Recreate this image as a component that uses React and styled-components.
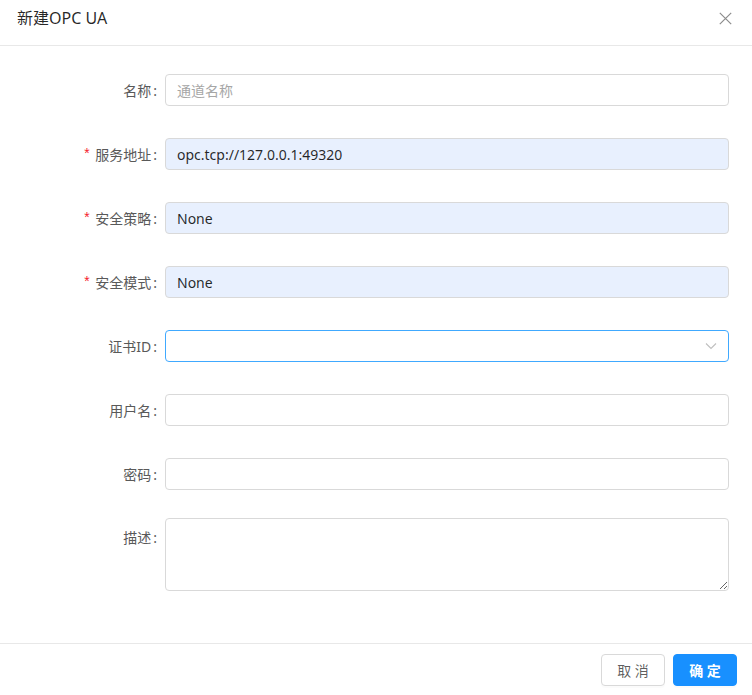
import React from "react";
import styled, { createGlobalStyle } from "styled-components";

const Global = createGlobalStyle`
  html, body { margin: 0; padding: 0; background: #fff; }
  body {
    font-family: "Noto Sans", "Noto Sans CJK SC", sans-serif;
    font-size: 14px;
    color: rgba(0,0,0,0.65);
  }
  * { box-sizing: border-box; }
`;

const Modal = styled.div`
  width: 752px;
  height: 695px;
  display: flex;
  flex-direction: column;
  background: #fff;
`;

const Header = styled.div`
  height: 46px;
  padding: 0 16px 9px 17px;
  display: flex;
  align-items: center;
  justify-content: space-between;
  border-bottom: 1px solid #e8e8e8;
`;

const Title = styled.div`
  font-size: 16px;
  line-height: 22px;
  color: rgba(0,0,0,0.85);
`;

const Close = styled.button`
  border: none;
  background: none;
  padding: 0;
  margin-right: 4px;
  width: 14px;
  height: 14px;
  display: flex;
  align-items: center;
  justify-content: center;
  cursor: pointer;
`;

const Body = styled.div`
  flex: 1;
  padding: 24px 23px 24px 24px;
  display: flex;
  flex-direction: column;
`;

const Item = styled.div`
  display: grid;
  grid-template-columns: 141px 1fr;
  min-height: 40px;
  margin-bottom: ${(p) => (p.$last ? 0 : 24)}px;
`;

const Label = styled.label`
  height: ${(p) => (p.$top ? 38 : 40)}px;
  display: flex;
  align-items: center;
  justify-content: flex-end;
  padding-right: 8px;
  color: #595959;
  white-space: nowrap;
`;

const Colon = styled.span`
  margin-left: 2px;
`;

const Star = styled.span`
  color: #f5222d;
  font-family: "Liberation Mono", monospace;
  font-size: 14px;
  margin-right: 4px;
  position: relative;
  top: 1px;
`;

const Control = styled.div`
  padding-top: ${(p) => (p.$top ? 0 : 4)}px;
  position: relative;
`;

const Input = styled.input`
  width: 100%;
  height: 32px;
  padding: 4px 11px;
  border: 1px solid ${(p) => (p.$focus ? "#40a9ff" : "#d9d9d9")};
  border-radius: 4px;
  background: ${(p) => (p.$filled ? "#e8f0fe" : "#fff")};
  font-family: "Noto Sans", "Noto Sans CJK SC", sans-serif;
  font-size: 14px;
  color: rgba(0,0,0,0.85);
  outline: none;
  &::placeholder { color: #a6a6a6; }
`;

const Arrow = styled.span`
  position: absolute;
  right: 12px;
  top: 14px;
  width: 12px;
  height: 12px;
  display: flex;
`;

const TextArea = styled.textarea`
  display: block;
  width: 100%;
  height: 73px;
  padding: 4px 11px;
  border: 1px solid #d9d9d9;
  border-radius: 4px;
  resize: vertical;
  font-family: "Noto Sans", "Noto Sans CJK SC", sans-serif;
  font-size: 14px;
  outline: none;
`;

const Footer = styled.div`
  border-top: 1px solid #e8e8e8;
  padding: 10px 15px 9px;
  display: flex;
  justify-content: flex-end;
  gap: 8px;
`;

const Button = styled.button`
  width: 64px;
  height: 32px;
  border-radius: 4px;
  font-family: "Noto Sans", "Noto Sans CJK SC", sans-serif;
  font-size: 14px;
  cursor: pointer;
  border: 1px solid ${(p) => (p.$primary ? "#1890ff" : "#d9d9d9")};
  background: ${(p) => (p.$primary ? "#1890ff" : "#fff")};
  color: ${(p) => (p.$primary ? "#fff" : "rgba(0,0,0,0.65)")};
  font-weight: ${(p) => (p.$primary ? 600 : 400)};
  box-shadow: 0 2px 0 rgba(0,0,0,0.015);
  padding: 0;
`;

const fields = [
  { label: "名称", placeholder: "通道名称" },
  { label: "服务地址", required: true, value: "opc.tcp://127.0.0.1:49320", filled: true },
  { label: "安全策略", required: true, value: "None", filled: true },
  { label: "安全模式", required: true, value: "None", filled: true },
  { label: "证书ID", select: true },
  { label: "用户名" },
  { label: "密码" },
];

export default function App() {
  return (
    <Modal>
      <Global />
      <Header>
        <Title>新建OPC UA</Title>
        <Close aria-label="close">
          <svg width="13" height="13" viewBox="0 0 13 13">
            <path d="M0.8 0.8L12.2 12.2M12.2 0.8L0.8 12.2" stroke="#8c8c8c" strokeWidth="1.2" fill="none" />
          </svg>
        </Close>
      </Header>
      <Body>
        {fields.map((f) => (
          <Item key={f.label}>
            <Label>
              {f.required && <Star>*</Star>}
              {f.label}
              <Colon>:</Colon>
            </Label>
            <Control>
              <Input
                readOnly
                placeholder={f.placeholder}
                defaultValue={f.value}
                $filled={f.filled}
                $focus={f.select}
              />
              {f.select && (
                <Arrow>
                  <svg width="12" height="12" viewBox="0 0 12 12">
                    <path d="M1 3.5L6 8.5L11 3.5" stroke="#bfbfbf" strokeWidth="1.1" fill="none" />
                  </svg>
                </Arrow>
              )}
            </Control>
          </Item>
        ))}
        <Item $last>
          <Label $top>
            描述<Colon>:</Colon>
          </Label>
          <Control $top>
            <TextArea />
          </Control>
        </Item>
      </Body>
      <Footer>
        <Button>取 消</Button>
        <Button $primary>确 定</Button>
      </Footer>
    </Modal>
  );
}
